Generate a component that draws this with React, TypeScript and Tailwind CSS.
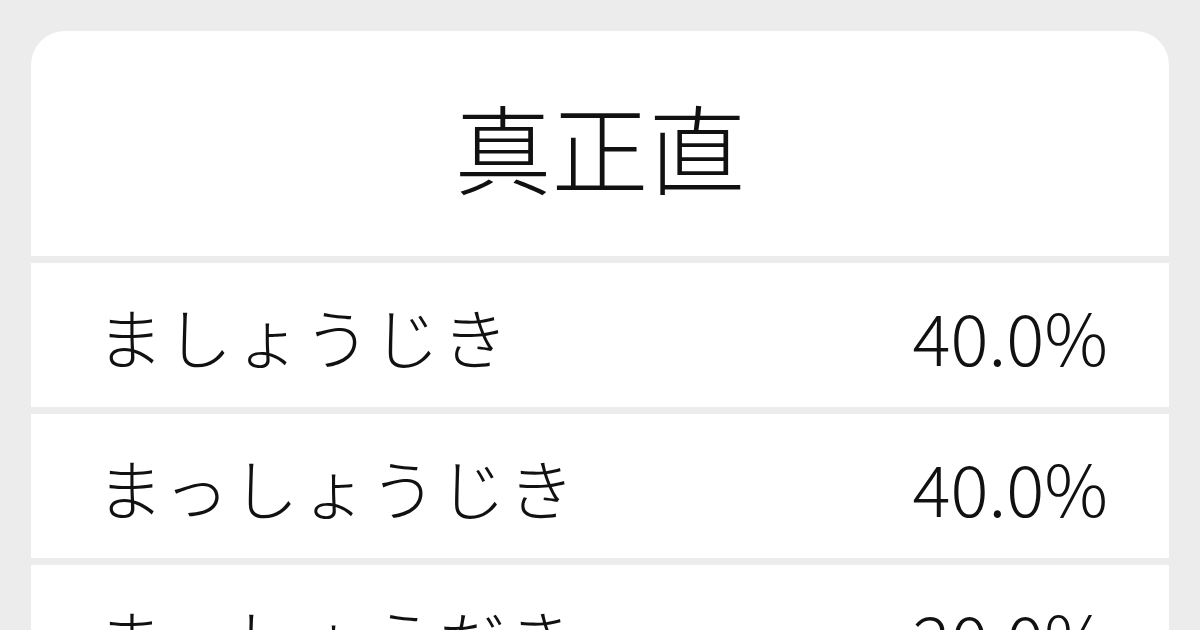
const rows = [
  { reading: "ましょうじき", rate: "40.0%" },
  { reading: "まっしょうじき", rate: "40.0%" },
  { reading: "まっしょうだき", rate: "20.0%" },
]

export default function App() {
  return (
    <div
      className="h-[630px] w-[1200px] overflow-hidden bg-[#ececec] px-[31px] pt-[31px] text-[#111]"
      style={{ fontFamily: '"Noto Sans CJK JP", "Noto Sans", sans-serif' }}
    >
      <div className="flex flex-col gap-[7px] overflow-hidden rounded-t-[34px]">
        <div className="flex h-[225px] items-center justify-center bg-white pt-[2px]">
          <h1 className="text-[97px] font-light leading-none">真正直</h1>
        </div>
        {rows.map((r) => (
          <div key={r.reading} className="flex h-[144px] shrink-0 items-center justify-between bg-white pl-[66px] pr-[61px]">
            <span className="text-[66px] font-light leading-none tracking-[3px]">{r.reading}</span>
            <span className="text-[71px] font-light leading-none">{r.rate}</span>
          </div>
        ))}
      </div>
    </div>
  )
}
